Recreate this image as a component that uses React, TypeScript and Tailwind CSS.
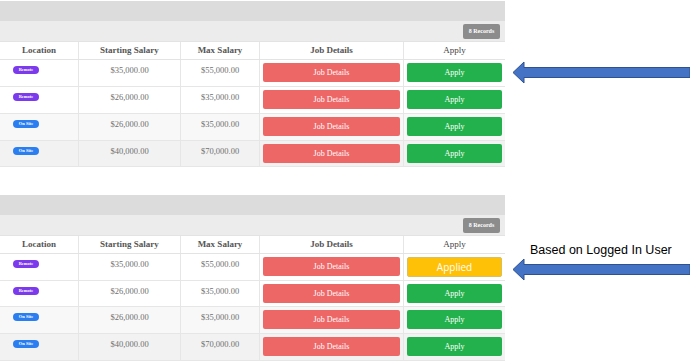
import React from 'react';

type Job = {
  location: 'Remote' | 'On Site';
  start: string;
  max: string;
  applied?: boolean;
};

const topJobs: Job[] = [
  { location: 'Remote', start: '$35,000.00', max: '$55,000.00' },
  { location: 'Remote', start: '$26,000.00', max: '$35,000.00' },
  { location: 'On Site', start: '$26,000.00', max: '$35,000.00' },
  { location: 'On Site', start: '$40,000.00', max: '$70,000.00' },
];

const bottomJobs: Job[] = [
  { location: 'Remote', start: '$35,000.00', max: '$55,000.00', applied: true },
  { location: 'Remote', start: '$26,000.00', max: '$35,000.00' },
  { location: 'On Site', start: '$26,000.00', max: '$35,000.00' },
  { location: 'On Site', start: '$40,000.00', max: '$70,000.00' },
];

const serif = { fontFamily: '"Liberation Serif", "DejaVu Serif", serif' };

const rowBg = ['bg-white', 'bg-white', 'bg-[#f8f8f8]', 'bg-[#f2f2f2]'];

function Arrow() {
  return (
    <svg width="178" height="23" viewBox="0 0 178 23" className="block">
      <path
        d="M1 11.5 L12 1 L12 6.5 L178 6.5 L178 16.5 L12 16.5 L12 22 Z"
        fill="#4472c4"
        stroke="#2f528f"
        strokeWidth="1"
      />
    </svg>
  );
}

function JobsPanel({ jobs, rowHeights }: { jobs: Job[]; rowHeights: string[] }) {
  return (
    <div className="w-[505px] overflow-hidden" style={serif}>
      {/* title bar */}
      <div className="h-[20px] bg-[#dcdcdc]"></div>
      <div className="h-[20px] bg-[#ececec] flex items-center justify-end pr-[5px]">
        <span className="h-[15px] w-[37px] rounded-[2px] bg-[#8c8c8c] text-white text-[6px] font-bold flex items-center justify-center">
          8 Records
        </span>
      </div>

      {/* header */}
      <div className="grid grid-cols-[78px_102px_79px_144px_102px] h-[19px] bg-white border-t border-b border-[#e3e3e3] text-[9px] font-bold text-[#555]">
        <div className="flex items-center justify-center">Location</div>
        <div className="flex items-center justify-center border-l border-[#e6e6e6]">Starting Salary</div>
        <div className="flex items-center justify-center border-l border-[#e6e6e6]">Max Salary</div>
        <div className="flex items-center justify-center border-l border-[#e6e6e6]">Job Details</div>
        <div className="flex items-center justify-center border-l border-[#e6e6e6] font-normal text-[#444]">Apply</div>
      </div>

      {jobs.map((job, i) => (
        <div
          key={i}
          className={`grid grid-cols-[78px_102px_79px_144px_102px] border-b border-[#e6e6e6] ${rowBg[i]} ${rowHeights[i]}`}
        >
          <div className="flex items-start pt-[6px] pl-[13px]">
            <span
              className={`flex h-[8px] w-[26px] items-center justify-center rounded-full text-[4.5px] leading-none font-bold text-white ${
                job.location === 'Remote' ? 'bg-[#7c3aed]' : 'bg-[#2a7ef0]'
              }`}
            >
              {job.location}
            </span>
          </div>
          <div className="border-l border-[#e6e6e6] pt-[4px] text-center text-[8.5px] text-[#6f6f6f]">{job.start}</div>
          <div className="border-l border-[#e6e6e6] pt-[4px] text-center text-[8.5px] text-[#6f6f6f]">{job.max}</div>
          <div className="border-l border-[#e6e6e6] pt-[3px] px-[3px]">
            <div className="h-[19px] rounded-[2px] bg-[#ed6767] text-white text-[8px] flex items-center justify-center">
              Job Details
            </div>
          </div>
          <div className="border-l border-[#e6e6e6] pt-[3px] px-[3px]">
            {job.applied ? (
              <div
                className="h-[20px] rounded-[2px] bg-[#ffc107] border border-[#d8c060] text-white text-[10px] flex items-center justify-center"
                style={{ fontFamily: '"Open Sans", sans-serif' }}
              >
                Applied
              </div>
            ) : (
              <div className="h-[19px] rounded-[2px] bg-[#22b14c] text-white text-[8px] flex items-center justify-center">
                Apply
              </div>
            )}
          </div>
        </div>
      ))}
    </div>
  );
}

export default function App() {
  return (
    <div className="w-[690px] h-[361px] overflow-hidden bg-white pt-[1px]">
      <div className="flex">
        <JobsPanel jobs={topJobs} rowHeights={['h-[27px]', 'h-[27px]', 'h-[27px]', 'h-[26px]']} />
        <div className="pt-[60px] pl-[7px]">
          <Arrow />
        </div>
      </div>

      <div className="flex mt-[28px]">
        <JobsPanel jobs={bottomJobs} rowHeights={['h-[27px]', 'h-[26px]', 'h-[27px]', 'h-[27px]']} />
        <div className="pt-[48px] pl-[7px]">
          <div
            className="pl-[18px] text-[12.5px] leading-[15px] text-black"
            style={{ fontFamily: '"Liberation Sans", Arial, sans-serif' }}
          >
            Based on Logged In User
          </div>
          <Arrow />
        </div>
      </div>
    </div>
  );
}
